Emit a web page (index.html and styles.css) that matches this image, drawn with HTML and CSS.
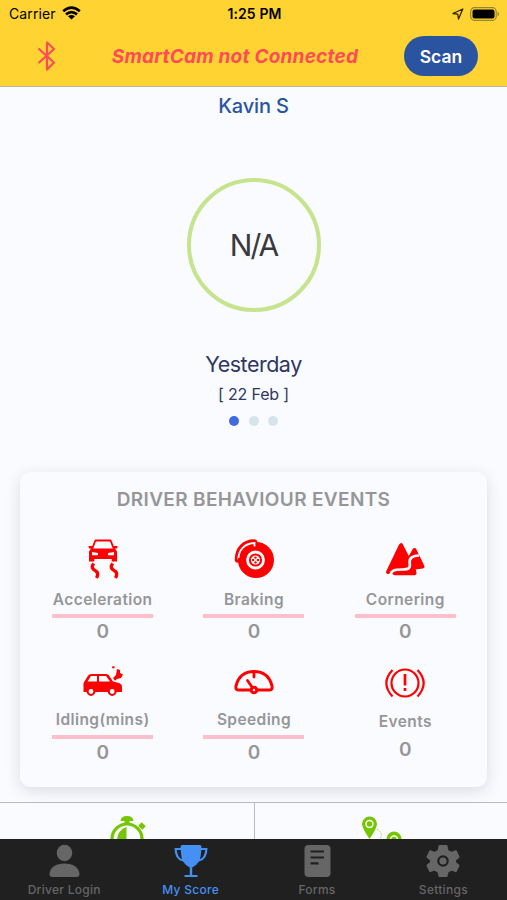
FILE: index.html
```html
<!DOCTYPE html>
<html lang="en">
<head>
<meta charset="utf-8">
<meta name="viewport" content="width=device-width, initial-scale=1">
<title>My Score</title>
<link rel="stylesheet" href="styles.css">
</head>
<body>
<div class="app">
  <header class="top">
    <div class="status">
      <div class="status-left"><span class="carrier">Carrier</span>
        <svg width="19" height="14" viewBox="0 0 19 14" fill="none" stroke="#000" stroke-width="2.7"><path d="M1.2 5.2Q9.5-2 17.8 5.2"/><path d="M4 8.4Q9.5 3.7 15 8.4"/><path d="M9.5 13.6 6 10.3Q9.5 7.6 13 10.3Z" fill="#000" stroke="none"/></svg>
      </div>
      <div class="clock">1:25 PM</div>
      <div class="status-right">
        <svg width="12" height="12" viewBox="0 0 12 12" fill="none" stroke="#2d260b" stroke-width="1.3" stroke-linejoin="round"><path d="M10.8 1 1 5.5 5.7 6.2 6.5 11Z"/></svg>
        <svg width="30" height="14" viewBox="0 0 30 14"><rect x=".7" y=".7" width="25.5" height="12.6" rx="3.8" fill="none" stroke="#9b822b" stroke-width="1.2"/><rect x="2.5" y="2.4" width="22" height="9.2" rx="2" fill="#000"/><path d="M27.6 4.5q3 2.5 0 5z" fill="#9b822b"/></svg>
      </div>
    </div>
    <div class="connect">
      <svg class="bluetooth" width="20" height="32" viewBox="0 0 20 32" fill="none" stroke="#ff4b58" stroke-width="2.2" stroke-linejoin="round"><path d="M1.5 8.5 17 22.5 10 29.5V2.5L17 9 1.5 23"/></svg>
      <div class="message">SmartCam not Connected</div>
      <button class="scan">Scan</button>
    </div>
  </header>
  <main>
    <h1 class="name">Kavin S</h1>
    <div class="score"><span>N/A</span></div>
    <div class="day">Yesterday</div>
    <div class="date">[ 22 Feb ]</div>
    <div class="dots"><i class="on"></i><i></i><i></i></div>
    <section class="card">
      <h2>DRIVER BEHAVIOUR EVENTS</h2>
      <div class="events">
        <div class="event">
          <svg width="40" height="40" viewBox="0 0 40 40"><g fill="none" stroke="red" stroke-linejoin="round"><path d="M9.2 9.7 12.4 1.5h15.2l3.2 8.2" stroke-width="1.8"/><path d="M10.7 24.5c-3 4-1 5.500 2 7.500q3.500 2 .8 7M29.700 24.500c-3 4-1 5.500 2 7.500q3.500 2 .8 7" stroke-width="3.300"/></g><path fill="red" fill-rule="evenodd" d="M8 9.500h24l2 3V22.500h-5.300V20H11.300v2.500H6V12.500zM9 13v3.200h6v-2.300zm16 .9v2.300h6V13zM5.500 7h4v2.500H6zM30.500 7h4L34 9.500h-3.500z"/></svg>
          <b>Acceleration</b><hr><strong>0</strong>
        </div>
        <div class="event">
          <svg width="40" height="40" viewBox="0 0 40 40"><circle cx="22" cy="21" r="18" fill="red"/><path d="M4 20.500C4 10 11 3.500 20 3.500" fill="none" stroke="red" stroke-width="6.500" stroke-linecap="round"/><path d="M4.300 20.500C4.500 10.500 11 4.300 20.500 4V7.500" fill="none" stroke="#fff" stroke-width="1.800"/><path d="M4 20.500H8.500Q9 11.500 18.500 8.500" fill="none" stroke="red" stroke-width="3"/><circle cx="21.500" cy="21" r="8" fill="red" stroke="#fff" stroke-width="2.800"/><circle cx="21.500" cy="21" r="4.600" fill="#fff"/><g fill="red"><circle cx="21.500" cy="18.600" r="1.200"/><circle cx="21.500" cy="23.400" r="1.200"/><circle cx="19.100" cy="21" r="1.200"/><circle cx="23.900" cy="21" r="1.200"/></g></svg>
          <b>Braking</b><hr><strong>0</strong>
        </div>
        <div class="event">
          <svg width="40" height="40" viewBox="0 0 40 40"><g fill="red" stroke="red" stroke-width="4" stroke-linejoin="round"><path d="M16 6.200 3 33 16 31 24 24 22 18Z"/><path d="M29.500 11 25 19 24 29 30 28.500 37.500 27.500Z"/><path d="M9.500 34.200H29.500L28 27 23 30Z"/></g><path d="M5.500 38C5 31.500 9 30.500 17 30.500 24 30.500 25.500 29 24.700 24 24 19 27 17 34 16.500" fill="none" stroke="#f9fbff" stroke-width="2.700"/></svg>
          <b>Cornering</b><hr><strong>0</strong>
        </div>
        <div class="event">
          <svg width="40" height="34" viewBox="0 0 40 34"><path fill="red" fill-rule="evenodd" d="M.500 27V18L4.500 11.500Q5.500 9 8 9H23Q25 9 26 10.500L30 16.500 36 18Q39 19 39 22V27H.500ZM4.500 16.500H14V11H8ZM16 11V16.500H27L23 11Z"/><g fill="#fff" stroke="red" stroke-width="2"><circle cx="8" cy="26.500" r="3.400"/><circle cx="29.200" cy="26.500" r="3.400"/></g><path fill="red" d="m34 4 3 1 0 3 3 1.500-2 3.500-4 1-2 1.800-2-2.800 3-3zM29.500 1l2.500.8-1 1.800-2-.6z"/></svg>
          <b>Idling(mins)</b><hr><strong>0</strong>
        </div>
        <div class="event">
          <svg width="40" height="34" viewBox="0 0 40 34" fill="none" stroke="red" stroke-width="3" stroke-linecap="round"><path d="M17 25H4Q1.500 25 2 21 5.500 6.500 20 6.500 34.500 6.500 38 21 38.500 25 36 25H23"/><circle cx="20" cy="25" r="2.800"/><path d="M18 22 13.500 15.500M20 8v4" stroke-width="2.800"/></svg>
          <b>Speeding</b><hr><strong>0</strong>
        </div>
        <div class="event last">
          <svg width="40" height="34" viewBox="0 0 40 34" fill="none" stroke="red" stroke-width="2.200"><circle cx="20" cy="18" r="13.500"/><path d="M7.500 5Q-4.800 18 7.500 31.500M32.500 5Q44.800 18 32.500 31.500"/><path d="M20 9v11.500M20 23v3" stroke-width="2.700"/></svg>
          <b>Events</b><strong>0</strong>
        </div>
      </div>
    </section>
    <div class="totals">
      <div><svg width="40" height="40" viewBox="0 0 40 40"><g fill="none" stroke="#76c500" stroke-width="3.200"><circle cx="20" cy="23" r="15"/><path d="M20 4v5M33 8l4 4" stroke-width="5"/></g><path d="M13.500 5Q14 0 20 0T26.500 5ZM19.500 11V36A13 13 0 0 1 19.500 11Z" fill="#76c500"/></svg></div>
      <div><svg width="42" height="40" viewBox="0 0 42 40"><path d="M9.500 23Q2 12 2 8A7.500 7.500 0 0 1 17 8Q17 12 9.500 23ZM34 38Q26 28 26.500 23A7.500 7.500 0 0 1 41.500 23Q42 28 34 38Z" fill="#76c500"/><g fill="none" stroke="#fff" stroke-width="1.400"><circle cx="9.500" cy="8" r="3.500"/><circle cx="34" cy="23.500" r="3.500"/></g><path d="M17 13q6 4 4 8l-2 4" fill="none" stroke="#a5d66c" stroke-dasharray="2 1"/></svg></div>
    </div>
  </main>
  <nav class="tabs">
    <a><svg width="34" height="34" viewBox="0 0 34 34" fill="#666"><ellipse cx="17.500" cy="9" rx="7.800" ry="8.300"/><path d="M2.500 30C3 23.500 9 19.500 17.500 19.500S32 23.500 32.500 30Q32.500 33 29.500 33H5.500Q2.500 33 2.500 30Z"/></svg><span>Driver Login</span></a>
    <a class="active"><svg width="34" height="34" viewBox="0 0 34 34"><path d="M8 1H26Q27.500 1 27.500 4H33.500Q33.500 16 25 17.500 22 22 18.200 23.500V31H23.500V33H10.500V31H15.800V23.500Q12 22 9 17.500 .500 16 .500 4H6.500Q6.500 1 8 1ZM6.700 6H2.800Q3.500 13.500 8 15.200Q7 11 6.700 6ZM27.300 6Q27 11 26 15.200 30.500 13.500 31.200 6Z" fill="#4590f5" fill-rule="evenodd"/></svg><span>My Score</span></a>
    <a><svg width="34" height="34" viewBox="0 0 34 34"><rect x="4.500" y="1" width="26" height="32" rx="4" fill="#666"/><path d="M10.500 7.500H24M10.500 13.500H24M10.500 19.300H18.500" stroke="#202020" stroke-width="2.200"/></svg><span>Forms</span></a>
    <a><svg width="34" height="34" viewBox="0 0 34 34"><path d="M13.500 2H20.500L21.500 7 25.500 9 29.800 7.200 32.500 13 29 16V18.500L32.500 21.500 29.800 27 25.500 25.500 21.500 28 20.500 32H13.500L12.500 28 8.500 25.500 4.200 27 1.500 21.500 5 18.500V16L1.500 13 4.200 7.200 8.500 9 12.500 7Z" fill="#666" stroke="#666" stroke-width="2" stroke-linejoin="round"/><circle cx="17" cy="17" r="4.700" fill="#666" stroke="#202020" stroke-width="2.200"/></svg><span>Settings</span></a>
  </nav>
</div>
</body>
</html>
```
FILE: styles.css
```css
* { box-sizing: border-box; }
body { margin: 0; font-family: Inter, "Liberation Sans", sans-serif; background: #f9fbff; }
svg { display: block; flex-shrink: 0; }
.app { width: 507px; height: 900px; display: flex; flex-direction: column; overflow: hidden; }
.top { height: 87px; flex-shrink: 0; background: #ffd432; border-bottom: 1px solid #b9b798; }
.status { height: 27px; padding: 0 7px 0 9px; display: grid; grid-template-columns: 1fr auto 1fr; align-items: center; font-size: 14px; }
.status-left, .status-right { display: flex; align-items: center; gap: 6px; }
.status-left svg { margin-top: -2px; }
.status-right { justify-content: flex-end; }
.carrier { letter-spacing: .1px; }
.clock { font-weight: 600; font-size: 14px; letter-spacing: .1px; }
.connect { height: 58px; display: grid; grid-template-columns: 84px 1fr 103px; align-items: center; }
.bluetooth { margin-left: 37px; }
.message { text-align: center; color: #ff4b58; font-size: 19px; font-weight: 650; font-style: italic; letter-spacing: .22px; white-space: nowrap; margin-right: 18px; }
.scan { width: 74px; height: 40px; border: 0; border-radius: 20px; background: #2b54a0; color: #fff; font: 600 17.5px Inter, sans-serif; padding: 0; }
main { flex: 1; min-height: 0; overflow: hidden; display: flex; flex-direction: column; align-items: center; }
.name { margin: 6px 0 0; height: 26px; line-height: 26px; font-size: 20px; font-weight: 550; letter-spacing: -.15px; color: #2b54a0; }
.score { width: 134px; height: 134px; margin-top: 59px; flex-shrink: 0; border: 4px solid #c6e38e; border-radius: 50%; display: flex; align-items: center; justify-content: center; color: #39393b; font-size: 30px; letter-spacing: -2px; }
.day { margin-top: 37px; height: 30px; line-height: 30px; font-size: 21.5px; color: #303761; letter-spacing: -.5px; }
.date { height: 30px; line-height: 30px; font-size: 16px; letter-spacing: -.15px; color: #303761; }
.dots { display: flex; gap: 9.5px; margin-top: 7px; }
.dots i { width: 10px; height: 10px; border-radius: 50%; background: #d5e3eb; }
.dots .on { background: #4169e1; }
.card { width: 467px; height: 315px; flex-shrink: 0; margin-top: 46px; padding: 14px 6px 0; border-radius: 10px; background: #f9fbff; box-shadow: 0 4px 15px rgba(35, 35, 45, .14); color: #969698; }
.card h2 { margin: 0; height: 27px; line-height: 28px; text-align: center; font-size: 19px; font-weight: 600; letter-spacing: .35px; }
.events { display: grid; grid-template-columns: repeat(3, 1fr); grid-template-rows: 127px 120px; padding: 26px 0 0 1px; }
.event { display: flex; flex-direction: column; align-items: center; }
.event b { margin-top: 8px; height: 24px; line-height: 25px; font-size: 15.5px; font-weight: 600; letter-spacing: .4px; }
.event hr { width: 101px; height: 4px; margin: 3px 0 0; border: 0; background: #fcbfcb; }
.event strong { margin-top: 1px; line-height: 25px; font-size: 19px; font-weight: 600; }
.event:nth-child(n+4) b { margin-top: 8px; }
.event:nth-child(n+4) svg { margin-top: -1px; }
.event.last b { margin-top: 10px; }
.event.last strong { margin-top: 4px; }
.event:nth-child(n+4) hr { margin-top: 4px; }
.totals { width: 100%; height: 60px; flex-shrink: 0; margin-top: 15px; display: grid; grid-template-columns: 1fr 1fr; border-top: 1px solid #b9bbc0; }
.totals div { padding: 13px 0 0; display: flex; justify-content: center; }
.totals div + div { border-left: 1px solid #b9bbc0; }
.tabs { height: 61px; flex-shrink: 0; display: grid; grid-template-columns: repeat(4, 126.4px); background: #202020; color: #666; padding: 5px 0 0 1px; font-size: 12px; font-weight: 500; letter-spacing: .28px; }
.tabs a { display: flex; flex-direction: column; align-items: center; }
.tabs span { margin-top: 4px; line-height: 16px; }
.tabs .active { color: #4590f5; }
```
